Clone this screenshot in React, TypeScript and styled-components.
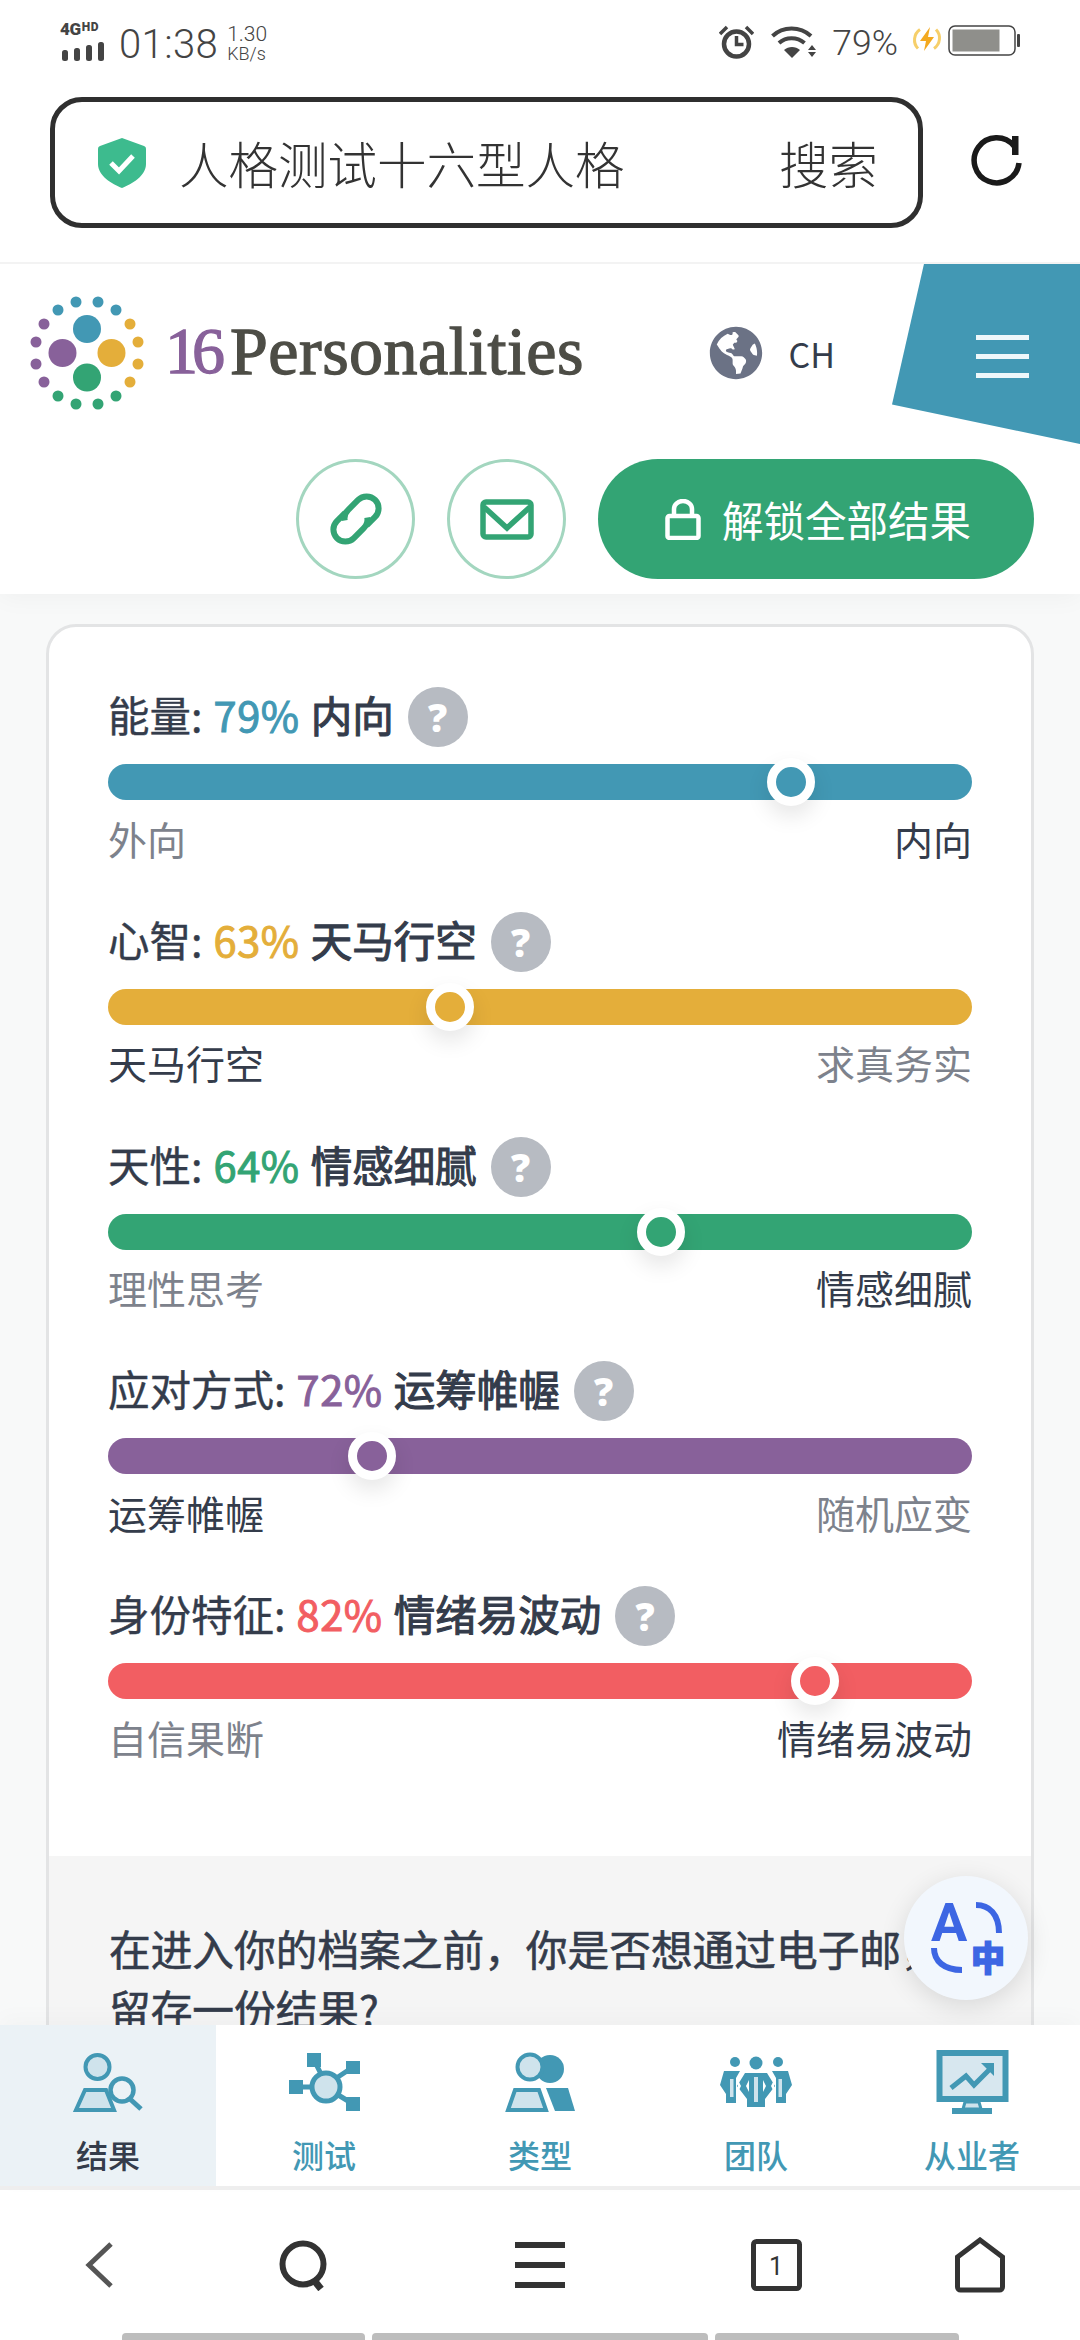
import * as React from "react";
import styled, { createGlobalStyle } from "styled-components";
import { FaGlobeAmericas } from "react-icons/fa";

const BLUE = "#4298b4";
const AMBER = "#e4ae3a";
const GREEN = "#33a474";
const PURPLE = "#88619a";
const RED = "#f25e62";
const INK = "#343c4b";
const MUTED = "#7d828c";
const PALE = "#cfe3ec";

const GlobalStyle = createGlobalStyle`
  html, body {
    margin: 0;
    padding: 0;
    background: #fff;
  }
  body {
    font-family: "Noto Sans CJK SC", "Noto Sans", sans-serif;
    color: ${INK};
  }
  * {
    box-sizing: border-box;
  }
`;

const Screen = styled.div`
  width: 1080px;
  height: 2340px;
  display: flex;
  flex-direction: column;
  overflow: hidden;
  background: #fff;
`;

/* status bar */
const StatusBar = styled.div`
  height: 82px;
  flex: none;
  display: flex;
  justify-content: space-between;
  padding: 15px 60px 0 60px;
  color: #444;
  font-family: Roboto, "Liberation Sans", sans-serif;
`;

const StatusGroup = styled.div`
  display: flex;
  align-items: flex-start;
`;

const NetBlock = styled.div`
  width: 46px;
  display: flex;
  flex-direction: column;
  margin-right: 13px;
  padding-top: 4px;
`;

const NetText = styled.div`
  display: flex;
  align-items: flex-start;
  height: 23px;
  font-size: 17px;
  line-height: 21px;
  font-weight: 900;
  letter-spacing: -0.3px;
  span {
    font-size: 12px;
    line-height: 17px;
    margin-left: 1px;
    letter-spacing: 0.5px;
  }
`;

const Clock = styled.div`
  font-size: 40px;
  line-height: 46px;
  font-weight: 300;
  letter-spacing: 0.4px;
  margin: 7px 9px 0 0;
`;

const Speed = styled.div`
  display: flex;
  flex-direction: column;
  padding-top: 9px;
  font-size: 21px;
  line-height: 20px;
  font-weight: 300;
  small {
    font-size: 18px;
    line-height: 20px;
  }
`;

const Battery = styled.div`
  font-size: 35.5px;
  line-height: 46px;
  font-weight: 300;
  margin: 5px 14px 0 15px;
  color: #444;
`;

const StatusIcon = styled.svg<{ $gap?: number }>`
  display: block;
  flex: none;
  margin-right: ${(p) => p.$gap ?? 0}px;
  margin-top: 10px;
`;

const Alarm = () => (
  <StatusIcon $gap={17} width="35" height="34" viewBox="0 0 35 34" fill="none" stroke="#444">
    <circle cx="17.5" cy="19" r="12.5" strokeWidth="4.5" />
    <path d="M17.5 11v8.5h7" strokeWidth="3.5" />
    <path d="M1 9l7-7M34 9l-7-7" strokeWidth="3.5" />
  </StatusIcon>
);

const Wifi = () => (
  <StatusIcon width="46" height="33" viewBox="0 0 46 33" fill="none" stroke="#444">
    <path d="M1.5 11C12 1 29 1 40 11" strokeWidth="4" />
    <path d="M8 18c7-6.500 18-6.500 25.500 0" strokeWidth="4" />
    <path d="M13 25l8 8 8-8c-4.500-4-11.500-4-16 0z" fill="#444" stroke="none" />
    <path d="M41 20l4 5h-8zM41 32l4-5h-8z" fill="#444" stroke="none" />
  </StatusIcon>
);

const Charge = () => (
  <StatusIcon $gap={6} width="30" height="28" viewBox="0 0 30 28" fill="none">
    <path d="M8 4.500a12.500 12.500 0 0 0-2 19" stroke="#f6cf6a" strokeWidth="3" />
    <path d="M22 23.500a12.500 12.500 0 0 0 2-19" stroke="#f6cf6a" strokeWidth="3" />
    <path d="M18 2 8 16h6l-2 10 10-14h-6z" fill="#f3a91f" />
  </StatusIcon>
);

const BatteryIcon = () => (
  <StatusIcon width="72" height="31" viewBox="0 0 72 31" fill="none">
    <rect x="1" y="1" width="66" height="29" rx="6" stroke="#444" strokeWidth="1.500" />
    <rect x="4.500" y="4.500" width="47" height="22" fill="#8f8f8b" />
    <rect x="69" y="9" width="3" height="13" rx="1" fill="#444" />
  </StatusIcon>
);

const SignalBars = () => (
  <svg width="46" height="20" viewBox="0 0 46 20" fill="#444">
    <rect x="2" y="8" width="6" height="11" rx="2.500" />
    <rect x="14" y="6" width="6" height="13" rx="2.500" />
    <rect x="26" y="3" width="6" height="16" rx="2.500" />
    <rect x="38" y="0" width="6" height="19" rx="2.500" />
  </svg>
);

/* browser bar */
const BrowserBar = styled.div`
  height: 180px;
  flex: none;
  display: flex;
  align-items: flex-start;
  padding: 15px 0 0 50px;
`;

const AddressBox = styled.div`
  width: 873px;
  height: 131px;
  border: 5.5px solid #2f2f2f;
  border-radius: 32px;
  display: flex;
  align-items: center;
  padding: 0 40px 0 43px;
  color: #333;
  font-size: 49.5px;
  font-weight: 300;
`;

const AddressText = styled.div`
  flex: 1;
  margin-left: 33px;
`;

const Reload = styled.svg`
  display: block;
  margin: 36px 0 0 48px;
`;

/* page viewport */
const Viewport = styled.div`
  flex: 1;
  min-height: 0;
  position: relative;
  overflow: hidden;
  border-top: 2px solid #f3f3f3;
  background: #f8f9f9;
`;

const SiteHeader = styled.header`
  position: relative;
  height: 330px;
  background: #fff;
  box-shadow: 0 4px 24px rgba(0, 0, 0, 0.04);
  display: flex;
  flex-direction: column;
`;

const TopRow = styled.div`
  height: 195px;
  flex: none;
  display: flex;
  align-items: flex-start;
  padding: 29px 245px 0 27px;
`;

const Wordmark = styled.div`
  height: 116px;
  margin-left: 18px;
  display: flex;
  align-items: center;
  font-family: "Liberation Serif", "DejaVu Serif", serif;
  font-size: 68px;
  font-weight: 400;
  color: #4d4d46;
  letter-spacing: 0.5px;
  -webkit-text-stroke: 1.3px #4d4d46;
  white-space: nowrap;
  span {
    font-size: 66px;
    color: ${PURPLE};
    -webkit-text-stroke: 1.3px ${PURPLE};
    letter-spacing: -6px;
    margin-right: 11px;
  }
`;

const LangPicker = styled.div`
  margin-left: auto;
  height: 120px;
  display: flex;
  align-items: center;
  gap: 26px;
  font-size: 34px;
  color: ${INK};
  svg {
    color: #6b7285;
  }
`;

const MenuFlag = styled.div`
  position: absolute;
  top: 0;
  right: 0;
  width: 188px;
  height: 180px;
  background: ${BLUE};
  clip-path: polygon(17% 0, 100% 0, 100% 100%, 0 78%);
  display: flex;
  flex-direction: column;
  gap: 14px;
  padding: 71px 0 0 84px;
`;

const MenuBar = styled.span`
  display: block;
  width: 53px;
  height: 5px;
  background: #eef7fa;
`;

const ActionRow = styled.div`
  display: flex;
  justify-content: flex-end;
  gap: 32px;
  padding-right: 46px;
`;

const RoundAction = styled.div`
  width: 119px;
  height: 120px;
  border: 3px solid #a3d6bf;
  border-radius: 50%;
  display: flex;
  align-items: center;
  justify-content: center;
  color: ${GREEN};
`;

const UnlockButton = styled.div`
  width: 436px;
  height: 120px;
  border-radius: 60px;
  background: ${GREEN};
  color: #fff;
  font-size: 41.5px;
  display: flex;
  align-items: center;
  gap: 21px;
  padding-left: 67px;
`;

const Main = styled.main`
  padding: 30px 46px 0;
`;

const Card = styled.section`
  background: #fff;
  border: 3px solid #e3e4e5;
  border-radius: 30px 30px 0 0;
`;

const Traits = styled.div`
  padding: 61px 59px 89px;
  display: flex;
  flex-direction: column;
  gap: 44.75px;
`;

const Trait = styled.div`
  display: flex;
  flex-direction: column;
`;

const TraitTitle = styled.div`
  height: 58px;
  display: flex;
  align-items: center;
`;

const TitleText = styled.div`
  font-size: 41.5px;
  line-height: 58px;
  margin-top: -6px;
  color: ${INK};
  -webkit-text-stroke: 0.4px ${INK};
`;

const Percent = styled.span<{ $color: string }>`
  color: ${(p) => p.$color};
  -webkit-text-stroke: 1px ${(p) => p.$color};
  letter-spacing: 0.6px;
  margin: 0 11px 0 11px;
`;

const TraitValue = styled.span`
  -webkit-text-stroke: 1.1px ${INK};
`;

const HelpBadge = styled.span`
  width: 60px;
  height: 60px;
  margin-left: 14px;
  border-radius: 50%;
  background: #b7bbc2;
  color: #fff;
  font-family: "Open Sans", "Noto Sans", sans-serif;
  font-size: 38px;
  font-weight: 800;
  display: flex;
  align-items: center;
  justify-content: center;
`;

const Track = styled.div<{ $color: string }>`
  position: relative;
  height: 36px;
  margin-top: 18px;
  border-radius: 18px;
  background: ${(p) => p.$color};
`;

const Knob = styled.span<{ $color: string }>`
  position: absolute;
  top: -6px;
  width: 48px;
  height: 48px;
  margin-left: -24px;
  border-radius: 50%;
  border: 9px solid #fff;
  background: ${(p) => p.$color};
  box-shadow: 0 10px 22px rgba(0, 0, 0, 0.1);
`;

const Ends = styled.div`
  height: 56px;
  margin-top: 12px;
  padding-bottom: 5px;
  display: flex;
  justify-content: space-between;
  align-items: center;
`;

const EndLabel = styled.span<{ $active: boolean }>`
  font-size: 39px;
  color: ${(p) => (p.$active ? INK : MUTED)};
`;

const SavePrompt = styled.div`
  background: #f5f5f5;
  padding: 62px 59px 60px 60px;
  font-size: 41.7px;
  line-height: 60px;
  color: ${INK};
  -webkit-text-stroke: 0.6px ${INK};
`;

const TranslateFab = styled.div`
  position: absolute;
  right: 52px;
  bottom: 25px;
  width: 124px;
  height: 124px;
  border-radius: 50%;
  background: #f2f7fd;
  box-shadow: 0 6px 26px rgba(0, 0, 0, 0.12);
  display: flex;
  align-items: center;
  justify-content: center;
`;

/* site tab bar */
const TabBar = styled.nav`
  position: relative;
  height: 165px;
  flex: none;
  display: grid;
  grid-template-columns: repeat(5, 1fr);
  background: #fff;
  border-bottom: 4px solid #eeeeee;
  box-shadow: 0 -8px 20px rgba(0, 0, 0, 0.025);
`;

const Tab = styled.div<{ $active?: boolean }>`
  display: flex;
  flex-direction: column;
  align-items: center;
  padding-top: 25px;
  background: ${(p) => (p.$active ? "#ebf2f6" : "transparent")};
  color: ${(p) => (p.$active ? INK : BLUE)};
  font-size: 32px;
  line-height: 44px;
  font-weight: 500;
  svg {
    display: block;
    margin-bottom: 16px;
  }
`;

const TabGlyph = ({ children }: { children: React.ReactNode }) => (
  <svg width="80" height="66" viewBox="0 0 80 66" fill={PALE} stroke={BLUE} strokeWidth="4">
    {children}
  </svg>
);

const ResultGlyph = () => (
  <TabGlyph>
    <circle cx="29.5" cy="17" r="12" />
    <path d="M17 40h21l8 20H8z" />
    <circle cx="54" cy="40" r="11.5" strokeWidth="4.5" fill="#ebf2f6" />
    <path d="M62 49l11 10" strokeWidth="5" />
  </TabGlyph>
);

const TestGlyph = () => (
  <TabGlyph>
    <path d="M30 10l8 16M69 17l-18 12M12 37h14M69 54l-18-11" strokeWidth="5" />
    <circle cx="42" cy="37" r="14" strokeWidth="5" />
    <g fill={BLUE} stroke="none">
      <rect x="23" y="3" width="14" height="14" />
      <rect x="62" y="11" width="14" height="13" />
      <rect x="5" y="30" width="14" height="14" />
      <rect x="62" y="47" width="14" height="14" />
    </g>
  </TabGlyph>
);

const TypesGlyph = () => (
  <TabGlyph>
    <circle cx="50" cy="19" r="14" fill={BLUE} stroke="none" />
    <circle cx="30" cy="17" r="12.5" />
    <path d="M15 40h24l7 20H8z" />
    <path d="M46 38h22l7 23H55z" fill={BLUE} stroke="none" />
  </TabGlyph>
);

const TeamGlyph = () => (
  <TabGlyph>
    <g fill={BLUE} stroke="none">
      <circle cx="19" cy="12" r="5" />
      <circle cx="40" cy="13" r="6.5" />
      <circle cx="62" cy="12" r="5" />
      <path d="M8 21h16l-4 7v25H10v-9L4 35z" />
      <path d="M72 21H56l4 7v25h10v-9l6-9z" />
      <path d="M29 23h22l8 13-10 13v8H31v-8L21 36z" />
    </g>
    <g fill={PALE} stroke="none">
      <rect x="14" y="29" width="3.5" height="18" />
      <rect x="62.5" y="29" width="3.5" height="18" />
      <rect x="38" y="27" width="4" height="25" />
    </g>
    <g fill="#fff" stroke="none">
      <path d="M22 30l3 6-3 6zM58 30l-3 6 3 6zM33 30l-3 6 3 6zM47 30l3 6-3 6z" />
    </g>
  </TabGlyph>
);

const ProGlyph = () => (
  <TabGlyph>
    <rect x="7.5" y="3" width="66" height="46" fill="#d7e7ef" strokeWidth="6" />
    <path d="M33 52h14l2 7H31z" fill={PALE} stroke={BLUE} strokeWidth="3" />
    <rect x="20" y="58" width="40" height="6" fill={BLUE} stroke="none" />
    <path d="M19 38l15-12 8 9 15-15" fill="none" strokeWidth="5" />
    <path d="M49 13h13v13z" fill={BLUE} stroke="none" />
  </TabGlyph>
);

/* browser bottom bar */
const ToolBar = styled.div`
  height: 150px;
  flex: none;
  display: flex;
  flex-direction: column;
  background: #fff;
`;

const ToolIcons = styled.div`
  height: 143px;
  flex: none;
  display: flex;
  align-items: center;
  padding-top: 7px;
`;

const ToolIcon = styled.svg<{ $left: number }>`
  display: block;
  flex: none;
  margin-left: ${(p) => p.$left}px;
`;

const Gesture = styled.div`
  height: 7px;
  display: flex;
  gap: 7px;
  padding-left: 122px;
`;

const GestureSeg = styled.span<{ $width: number }>`
  display: block;
  width: ${(p) => p.$width}px;
  background: #bdbdbd;
  border-radius: 4px 4px 0 0;
`;

const traits = [
  { label: "能量:", pct: "79%", value: "内向", color: BLUE, pos: 79, left: "外向", right: "内向", on: "right" },
  { label: "心智:", pct: "63%", value: "天马行空", color: AMBER, pos: 39.6, left: "天马行空", right: "求真务实", on: "left" },
  { label: "天性:", pct: "64%", value: "情感细腻", color: GREEN, pos: 64, left: "理性思考", right: "情感细腻", on: "right" },
  { label: "应对方式:", pct: "72%", value: "运筹帷幄", color: PURPLE, pos: 30.6, left: "运筹帷幄", right: "随机应变", on: "left" },
  { label: "身份特征:", pct: "82%", value: "情绪易波动", color: RED, pos: 81.8, left: "自信果断", right: "情绪易波动", on: "right" },
];

const dots: [number, number, string][] = [
  [-11, -51, BLUE], [11, -51, BLUE], [-29, -43, BLUE], [29, -43, BLUE],
  [-43, -29, PURPLE], [-51, -11, PURPLE], [-51, 11, PURPLE], [-43, 29, PURPLE],
  [43, -29, AMBER], [51, -11, AMBER], [51, 11, AMBER], [43, 29, AMBER],
  [-29, 43, GREEN], [29, 43, GREEN], [-11, 51, GREEN], [11, 51, GREEN],
];

const tabs = [
  { name: "结果", glyph: <ResultGlyph />, active: true },
  { name: "测试", glyph: <TestGlyph /> },
  { name: "类型", glyph: <TypesGlyph /> },
  { name: "团队", glyph: <TeamGlyph /> },
  { name: "从业者", glyph: <ProGlyph /> },
];

const App = () => {
  return (
    <Screen>
      <GlobalStyle />
      <StatusBar>
        <StatusGroup>
          <NetBlock>
            <NetText>
              4G<span>HD</span>
            </NetText>
            <SignalBars />
          </NetBlock>
          <Clock>01:38</Clock>
          <Speed>
            1.30
            <small>KB/s</small>
          </Speed>
        </StatusGroup>
        <StatusGroup>
          <Alarm />
          <Wifi />
          <Battery>79%</Battery>
          <Charge />
          <BatteryIcon />
        </StatusGroup>
      </StatusBar>

      <BrowserBar>
        <AddressBox>
          <svg width="48" height="50" viewBox="0 0 48 50">
            <path d="M24 0l22 8c2 .7 2 2 2 4v14c0 12-14 20-24 24C14 46 0 38 0 26V12c0-2 0-3.300 2-4z" fill="#3dbb8e" />
            <path d="M13 25l8 8 14-15" fill="none" stroke="#fff" strokeWidth="5" />
          </svg>
          <AddressText>人格测试十六型人格</AddressText>
          <span>搜索</span>
        </AddressBox>
        <Reload width="54" height="54" viewBox="0 0 54 54" fill="none">
          <path d="M48 30a22.500 22.500 0 1 1-5-17" stroke="#1a1a1a" strokeWidth="5.5" />
          <rect x="41" y="3" width="6.5" height="19" fill="#1a1a1a" />
        </Reload>
      </BrowserBar>

      <Viewport>
        <SiteHeader>
          <TopRow>
            <svg width="120" height="120" viewBox="-60 -60 120 120">
              <circle cx="0" cy="-24" r="14" fill={BLUE} />
              <circle cx="-24.5" cy="0" r="14" fill={PURPLE} />
              <circle cx="24.5" cy="0" r="14" fill={AMBER} />
              <circle cx="0" cy="24.5" r="14" fill={GREEN} />
              {dots.map(([x, y, c]) => (
                <circle key={`${x}-${y}`} cx={x} cy={y} r="5.5" fill={c} />
              ))}
            </svg>
            <Wordmark>
              <span>16</span>Personalities
            </Wordmark>
            <LangPicker>
              <FaGlobeAmericas size={54} />
              CH
            </LangPicker>
          </TopRow>
          <MenuFlag>
            <MenuBar />
            <MenuBar />
            <MenuBar />
          </MenuFlag>
          <ActionRow>
            <RoundAction>
              <svg width="66" height="66" viewBox="0 0 66 66" fill="none" stroke={GREEN} strokeWidth="6">
                <g transform="rotate(-45 33 33)">
                  <path d="M30 21H18a12 12 0 0 0 0 24h14a12 12 0 0 0 10-5" />
                  <path d="M36 45h12a12 12 0 0 0 0-24H34a12 12 0 0 0-10 5" />
                </g>
              </svg>
            </RoundAction>
            <RoundAction>
              <svg width="54" height="41" viewBox="0 0 54 41" fill="none" stroke={GREEN} strokeWidth="5.5">
                <rect x="3" y="3" width="48" height="35" rx="3" />
                <path d="M4 8l23 21L50 8" />
              </svg>
            </RoundAction>
            <UnlockButton>
              <svg width="36" height="41" viewBox="0 0 36 41" fill="none" stroke="#fff" strokeWidth="4.5">
                <rect x="2.5" y="17" width="31" height="22" rx="2" />
                <path d="M9 17V10a9 8 0 0 1 18 0v7" />
              </svg>
              解锁全部结果
            </UnlockButton>
          </ActionRow>
        </SiteHeader>

        <Main>
          <Card>
            <Traits>
              {traits.map((t) => (
                <Trait key={t.label}>
                  <TraitTitle>
                    <TitleText>
                      {t.label}
                      <Percent $color={t.color}>{t.pct}</Percent>
                      <TraitValue>{t.value}</TraitValue>
                    </TitleText>
                    <HelpBadge>?</HelpBadge>
                  </TraitTitle>
                  <Track $color={t.color}>
                    <Knob $color={t.color} style={{ left: `${t.pos}%` }} />
                  </Track>
                  <Ends>
                    <EndLabel $active={t.on === "left"}>{t.left}</EndLabel>
                    <EndLabel $active={t.on === "right"}>{t.right}</EndLabel>
                  </Ends>
                </Trait>
              ))}
            </Traits>
            <SavePrompt>在进入你的档案之前，你是否想通过电子邮，留存一份结果?</SavePrompt>
          </Card>
        </Main>

        <TranslateFab>
          <svg width="84" height="84" viewBox="0 0 84 84" fill="none" stroke="#3d66e3" strokeWidth="6">
            <text x="7" y="45" fontFamily="Roboto, sans-serif" fontSize="54" fontWeight="700" fill="#3d66e3" stroke="none">
              A
            </text>
            <path d="M52 9c13 0 23 9 23 28" />
            <path d="M10 52c0 13 10 22 28 22" />
            <text x="47" y="75" fontFamily="'Noto Sans CJK SC', sans-serif" fontSize="34" fontWeight="900" fill="#3d66e3" stroke="#3d66e3" strokeWidth="1.5">
              中
            </text>
          </svg>
        </TranslateFab>
      </Viewport>

      <TabBar>
        {tabs.map((t) => (
          <Tab key={t.name} $active={t.active}>
            {t.glyph}
            {t.name}
          </Tab>
        ))}
      </TabBar>

      <ToolBar>
        <ToolIcons>
          <ToolIcon $left={84} width="30" height="46" viewBox="0 0 30 46" fill="none" stroke="#555" strokeWidth="5">
            <path d="M27 2L5 23l22 21" />
          </ToolIcon>
          <ToolIcon $left={165} width="50" height="51" viewBox="0 0 50 51" fill="none" stroke="#333" strokeWidth="6">
            <circle cx="24" cy="24" r="20.5" />
            <path d="M34 39l8 10" strokeWidth="7" />
          </ToolIcon>
          <ToolIcon $left={186} width="50" height="47" viewBox="0 0 50 47" fill="#333">
            <rect x="0" y="0" width="50" height="6" />
            <rect x="0" y="20" width="50" height="6" />
            <rect x="0" y="40" width="50" height="6" />
          </ToolIcon>
          <ToolIcon $left={186} width="51" height="52" viewBox="0 0 51 52" fill="none" stroke="#333" strokeWidth="5">
            <rect x="2.5" y="2.5" width="46" height="47" rx="3" />
            <text x="25" y="36" textAnchor="middle" fontFamily="Roboto, sans-serif" fontSize="25" fill="#333" stroke="none">
              1
            </text>
          </ToolIcon>
          <ToolIcon $left={153} width="50" height="56" viewBox="0 0 50 56" fill="none" stroke="#333" strokeWidth="5">
            <path d="M25 3L47.5 20v30a3 3 0 0 1-3 3h-39a3 3 0 0 1-3-3V20z" />
          </ToolIcon>
        </ToolIcons>
        <Gesture>
          <GestureSeg $width={243} />
          <GestureSeg $width={336} />
          <GestureSeg $width={244} />
        </Gesture>
      </ToolBar>
    </Screen>
  );
};

export default App;
